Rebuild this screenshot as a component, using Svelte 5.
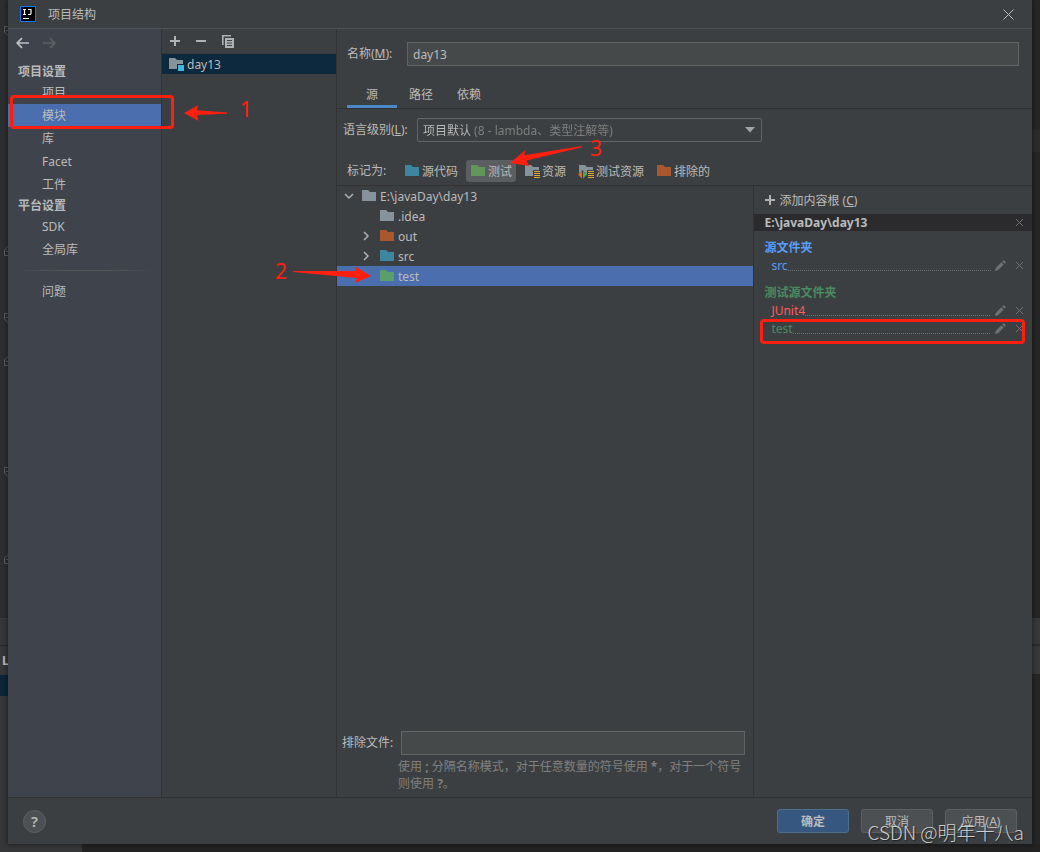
<script>
  const projectItems = ['项目', '模块', '库', 'Facet', '工件'];
  const platformItems = ['SDK', '全局库'];
  let section = $state('模块');
  let moduleName = $state('day13');
  let excluded = $state('');
  let tab = $state('源');

  const marks = [
    { label: '源代码', color: '#3e86a0' },
    { label: '测试', color: '#62975a', active: true },
    { label: '资源', color: '#87939a', badge: 'res' },
    { label: '测试资源', color: '#87939a', badge: 'testres' },
    { label: '排除的', color: '#a9572f' }
  ];

  const tree = [
    { label: 'E:\\javaDay\\day13', color: '#87939a', level: 0, arrow: 'down' },
    { label: '.idea', color: '#87939a', level: 1 },
    { label: 'out', color: '#a9572f', level: 1, arrow: 'right' },
    { label: 'src', color: '#3e86a0', level: 1, arrow: 'right' },
    { label: 'test', color: '#599e6b', level: 1, selected: true }
  ];

  // Fold markers in the editor behind the dialog: opening ones point down, closing ones point up.
  const gutterMarks = [
    { y: 31 },
    { y: 250, up: true },
    { y: 318 },
    { y: 360, up: true },
    { y: 472 },
    { y: 558, up: true }
  ];
</script>

{#snippet folder(color, badge)}
  <svg class="folder" width="16" height="16" viewBox="0 0 16 16" aria-hidden="true">
    <path d="M1 2h6l2 2h6v9H1z" fill={color} />
    {#if badge === 'module'}
      <path d="M9 8h7v8H9z" fill="#0d293e" />
      <path d="M10 9h6v6h-6z" fill="#40b6e0" />
    {:else if badge}
      <path d="M9 7h7v9H9z" fill="#3c3f41" />
      <path d="M10 8h6v1h-6zM10 10h6v1h-6zM10 12h6v1h-6zM10 14h6v1h-6z" fill="#e0a63c" shape-rendering="crispEdges" />
      {#if badge === 'testres'}
        <path d="M0 12l4.500-5L9 12v4H0z" fill="#3c3f41" />
        <path d="M4 8v7.500L.2 11.800z" fill="#f26522" />
        <path d="M5 8v7.500l3.800-3.700z" fill="#4fae3d" />
      {/if}
    {/if}
  </svg>
{/snippet}

{#snippet cross()}
  <svg width="9" height="9" viewBox="0 0 9 9" aria-hidden="true">
    <path d="M1 1l7 7M8 1L1 8" stroke="currentColor" fill="none" />
  </svg>
{/snippet}

{#snippet plus()}
  <svg width="10" height="10" viewBox="0 0 10 10" aria-hidden="true">
    <path d="M5 0v10M0 5h10" stroke="#afb1b3" stroke-width="2" />
  </svg>
{/snippet}

{#snippet rootEntry(name, kind)}
  <li class="entry {kind}">
    <span>{name}</span>
    <i class="dots"></i>
    <button class="bare mini" aria-label="编辑">
      <svg width="12" height="12" viewBox="0 0 12 12" aria-hidden="true">
        <path d="M1 11l.7-3 5.700-5.700 2.300 2.300L4 10.300zM8.200 1.500l1-1q.5-.4 1 0l1.300 1.300q.4.5 0 1l-1 1z" fill="#6e7173" />
      </svg>
    </button>
    <button class="bare mini" aria-label="移除">{@render cross()}</button>
  </li>
{/snippet}

<div class="desktop">
  <div class="behind" aria-hidden="true">
    {#each gutterMarks as mark}
      <svg class="gutter" style="top:{mark.y - 5}px" width="8" height="11" viewBox="0 0 8 11">
        {#if mark.up}
          <path d="M9 .5L4.500 5v5.500H9M6 6.500h3" fill="none" stroke="#5c5e60" />
        {:else}
          <path d="M9 .5H4.500v5.500L9 10.500M6 4.500h3" fill="none" stroke="#5c5e60" />
        {/if}
      </svg>
    {/each}
    <div class="strip left"><b>L</b><i></i></div>
    <div class="strip right"></div>
    <div class="caret-row"></div>
    <div class="status"></div>
  </div>

  <div class="dialog" role="dialog" aria-label="项目结构">
    <header>
      <svg width="16" height="16" viewBox="0 0 16 16" aria-hidden="true">
        <path d="M.5.5h15v15H.5z" fill="#000" stroke="#0d7cf2" />
        <path d="M3 3.500h3M4.500 3.500v5M3 8.500h3M8 3.500h3v3.700q0 1.300-1.300 1.300H8M3 12.500h6" fill="none" stroke="#fff" stroke-width="1.200" />
      </svg>
      <h1>项目结构</h1>
      <button class="bare close" aria-label="关闭">
        <svg width="11" height="11" viewBox="0 0 11 11" aria-hidden="true">
          <path d="M.5.5l10 10M10.500.5l-10 10" stroke="#bbb" />
        </svg>
      </button>
    </header>

    <div class="body">
      <nav class="sidebar">
        <div class="history">
          <button class="bare" aria-label="后退">
            <svg width="14" height="12" viewBox="0 0 14 12" aria-hidden="true">
              <path d="M13 6H1.500M6 1.200L1.200 6 6 10.800" fill="none" stroke="#bfc1c3" stroke-width="1.700" />
            </svg>
          </button>
          <button class="bare" aria-label="前进" disabled>
            <svg width="14" height="12" viewBox="0 0 14 12" aria-hidden="true">
              <path d="M0 6h11.500M7 1.200L11.800 6 7 10.800" fill="none" stroke="#5c6064" stroke-width="1.700" />
            </svg>
          </button>
        </div>
        <h2>项目设置</h2>
        {#each projectItems as item}
          <button class="nav" class:selected={section === item} onclick={() => (section = item)}>{item}</button>
        {/each}
        <h2>平台设置</h2>
        {#each platformItems as item}
          <button class="nav" class:selected={section === item} onclick={() => (section = item)}>{item}</button>
        {/each}
        <hr />
        <button class="nav" class:selected={section === '问题'} onclick={() => (section = '问题')}>问题</button>
        <div class="note box-one"></div>
        <svg class="note arrow-one" width="70" height="24" viewBox="0 0 70 24">
          <path d="M0 14L14.500 6l-1.800 5.200 30.300 2.300v1.200l-30 1.300 1.500 6z" fill="#ff1f10" />
          <text x="56" y="18">1</text>
        </svg>
      </nav>

      <section class="modules">
        <div class="tools">
          <button class="bare" aria-label="添加">{@render plus()}</button>
          <button class="bare" aria-label="删除">
            <svg width="10" height="10" viewBox="0 0 10 10" aria-hidden="true"><path d="M0 5h10" stroke="#afb1b3" stroke-width="2" /></svg>
          </button>
          <button class="bare" aria-label="复制">
            <svg width="12" height="13" viewBox="0 0 12 13" aria-hidden="true">
              <path d="M.8 10V.8H9" fill="none" stroke="#afb1b3" stroke-width="1.600" />
              <path d="M3 3h9v10H3z" fill="#afb1b3" />
              <path d="M5 5.500h5M5 8h5M5 10.500h5" stroke="#3c3f41" />
            </svg>
          </button>
        </div>
        <div class="module">{@render folder('#87939a', 'module')}<span>day13</span></div>
      </section>

      <main>
        <div class="row name">
          <label for="name">名称(<u>M</u>):</label>
          <input id="name" bind:value={moduleName} />
        </div>
        <div class="tabs" role="tablist">
          {#each ['源', '路径', '依赖'] as t}
            <button role="tab" aria-selected={tab === t} class:current={tab === t} onclick={() => (tab = t)}>{t}</button>
          {/each}
        </div>
        <div class="row level">
          <label for="level">语言级别(<u>L</u>):</label>
          <div class="combo">
            <select id="level"><option>项目默认 (8 - lambda、类型注解等)</option></select>
            <svg width="10" height="6" viewBox="0 0 10 6" aria-hidden="true"><path d="M0 0h10L5 5.500z" fill="#a2a5a7" /></svg>
          </div>
        </div>
        <div class="row marks">
          <span class="caption">标记为:</span>
          {#each marks as m}
            <button class="mark" class:active={m.active}>{@render folder(m.color, m.badge)}<span>{m.label}</span></button>
          {/each}
          <svg class="note arrow-three" width="100" height="32" viewBox="0 0 100 32">
            <path d="M0 25L15.500 12l-1.300 5.200L72 8v1.200L16.500 22.500l2.500 5.500z" fill="#ff1f10" />
            <text x="80" y="18">3</text>
          </svg>
        </div>

        <div class="split">
          <div class="left-pane">
            <ul class="tree">
              {#each tree as node}
                <li class:child={node.level === 1} class:selected={node.selected}>
                  <span class="twist">
                    {#if node.arrow === 'down'}
                      <svg width="10" height="10" viewBox="0 0 10 10"><path d="M1 3l4 4 4-4" fill="none" stroke="#afb1b3" stroke-width="1.500" /></svg>
                    {:else if node.arrow}
                      <svg width="10" height="10" viewBox="0 0 10 10"><path d="M2 1l4 4-4 4" fill="none" stroke="#afb1b3" stroke-width="1.500" /></svg>
                    {/if}
                  </span>
                  {@render folder(node.color)}<span class="label">{node.label}</span>
                </li>
              {/each}
            </ul>
            <svg class="note arrow-two" width="100" height="28" viewBox="0 0 100 28">
              <text x="0" y="20">2</text>
              <path d="M18 12l62.500 0L80 7.500 96 17l-16 7 1.800-5L18 13z" fill="#ff1f10" />
            </svg>
            <div class="exclude">
              <label for="excluded">排除文件:</label>
              <input id="excluded" bind:value={excluded} />
              <p>使用 <b>;</b> 分隔名称模式，对于任意数量的符号使用 <b>*</b>，对于一个符号则使用 <b>?</b>。</p>
            </div>
          </div>

          <aside>
            <button class="bare add">{@render plus()}<span>添加内容根 (<u>C</u>)</span></button>
            <div class="root"><b>E:\javaDay\day13</b><button class="bare mini" aria-label="移除">{@render cross()}</button></div>
            <h3 class="blue">源文件夹</h3>
            <ul>{@render rootEntry('src', 'blue')}</ul>
            <h3 class="green">测试源文件夹</h3>
            <ul>
              {@render rootEntry('JUnit4', 'red')}
              {@render rootEntry('test', 'green')}
            </ul>
            <div class="note box-two"></div>
          </aside>
        </div>
      </main>
    </div>

    <footer>
      <button class="help" aria-label="帮助">?</button>
      <button class="push primary">确定</button>
      <button class="push">取消</button>
      <button class="push">应用(<u>A</u>)</button>
    </footer>
  </div>
  <div class="watermark">CSDN @明年十八a</div>
</div>

<style>
  :global(body) { margin: 0; background: #262626; }
  .desktop {
    position: relative;
    box-sizing: border-box;
    height: 100vh;
    min-height: 640px;
    padding: 0 8px 8px;
    overflow: hidden;
    color: #bbb;
    font: 12px/20px "Noto Sans", "Noto Sans CJK SC", sans-serif;
  }
  .desktop *, .desktop *::before { box-sizing: border-box; }
  h1, h2, h3, p, ul { margin: 0; padding: 0; font-size: 12px; }
  ul { list-style: none; }
  svg { display: block; flex: none; }
  button, input, select { font: inherit; color: inherit; margin: 0; }
  .bare { display: flex; align-items: center; padding: 0; border: 0; background: none; }

  .behind { position: absolute; inset: 0; background: linear-gradient(90deg, #2d2e2f 50%, #262626 50%); }
  .gutter { position: absolute; left: 0; }
  .strip { position: absolute; top: 618px; width: 50%; }
  .strip.left { left: 0; bottom: 0; background: #353739; border-top: 1px solid #3a3c3e; }
  .strip.left b { display: block; margin-top: 26px; padding-left: 2px; border-top: 1px solid #292a2b; line-height: 29px; }
  .strip.left i { display: block; height: 21px; background: #0c2539; }
  .strip.right { right: 0; height: 56px; background: linear-gradient(#37383a 26px, #2c2d2e 26px 28px, #37383a 28px); }
  .caret-row { position: absolute; right: 0; top: 130px; width: 8px; height: 22px; background: #2c2c2c; }
  .status { position: absolute; left: 82px; right: 0; bottom: 0; height: 8px; background: #232323; }

  .dialog {
    position: relative;
    display: flex;
    flex-direction: column;
    height: 100%;
    background: #3c3f41;
    box-shadow: 0 0 5px 1px rgba(0, 0, 0, .4);
  }
  header { display: flex; align-items: center; height: 29px; padding: 0 18px 0 12px; border-bottom: 1px solid #505355; }
  h1 { flex: 1; margin-left: 12px; padding-top: 2px; font-weight: 400; }
  .body { flex: 1; display: flex; min-height: 0; }

  .sidebar { position: relative; z-index: 2; flex: none; width: 154px; background: #3e434c; border-right: 1px solid #323232; }
  .history { display: flex; gap: 13px; height: 28px; margin-bottom: 5px; padding-left: 8px; }
  h2 { padding-left: 10px; line-height: 19px; }
  .nav { display: block; width: 100%; height: 23px; padding: 0 0 0 34px; border: 0; background: none; line-height: 23px; text-align: left; }
  .nav.selected { background: #4b6eaf; }
  hr { height: 1px; margin: 9px 6px; border: 0; background: linear-gradient(90deg, transparent, #55575a 35%, #55575a 65%, transparent); }

  .modules { flex: none; width: 175px; border-right: 1px solid #323232; }
  .tools { display: flex; gap: 16px; height: 25px; padding-left: 8px; border-bottom: 1px solid #36393b; }
  .module { display: flex; align-items: center; gap: 3px; height: 20px; padding-left: 6px; background: #0d293e; }
  .module span, .tree .label { padding-top: 2px; }

  main { flex: 1; display: flex; flex-direction: column; min-width: 0; }
  .row { display: flex; align-items: center; flex: none; }
  .row label { flex: none; }
  input { width: 100%; height: 24px; padding: 0 5px; border: 1px solid #646464; background: #45494a; outline: 0; }
  .name { padding: 13px 13px 0 10px; }
  .name label { width: 60px; }
  .tabs { display: flex; height: 43px; padding: 15px 10px 0; border-bottom: 1px solid #323232; }
  .tabs button { padding: 4px 12px 0; border: 0; border-bottom: 3px solid transparent; background: none; }
  .tabs .current { min-width: 50px; border-bottom-color: #4a88c7; }
  .level { height: 42px; padding-left: 6px; }
  .level label { width: 74px; }
  .combo { display: flex; align-items: center; width: 50%; height: 24px; padding: 0 6px 0 5px; border: 1px solid #646464; border-radius: 2px; }
  select {
    flex: 1;
    min-width: 0;
    height: 22px;
    padding: 1px 0 0;
    border: 0;
    outline: 0;
    appearance: none;
    color: transparent;
    background: linear-gradient(90deg, #bbb 51px, #808080 51px);
    -webkit-background-clip: text;
    background-clip: text;
  }
  option { color: #bbb; background: #3c3f41; }
  .marks { position: relative; gap: 4px; height: 34px; padding: 6px 0 0 10px; }
  .caption { width: 49px; }
  .mark { display: flex; align-items: center; gap: 2px; height: 22px; padding: 0 4px; border: 0; border-radius: 3px; background: none; white-space: nowrap; }
  .mark span { padding-top: 2px; }
  .mark.active { background: #5a5e60; }

  .split { flex: 1; display: flex; min-height: 0; border-top: 1px solid #323232; }
  .left-pane { position: relative; flex: 3; display: flex; flex-direction: column; justify-content: space-between; border-right: 1px solid #323232; }
  .tree li { display: flex; align-items: center; gap: 3px; height: 20px; padding-left: 7px; }
  .tree .child { padding-left: 25px; }
  .tree .selected { background: #4b6eaf; }
  .twist { width: 14px; }
  .exclude { display: grid; grid-template-columns: 59px 1fr; padding: 0 8px 5px 5px; align-items: center; }
  .exclude p { grid-column: 2; margin: 3px 0 0 -3px; color: #808080; line-height: 17px; }

  aside { position: relative; flex: 2; }
  .add { gap: 4px; height: 28px; padding-left: 11px; }
  .add span { padding-top: 2px; }
  .root { display: flex; align-items: center; justify-content: space-between; height: 17px; padding: 0 8px 0 10px; background: #2b2b2d; }
  .mini { color: #6e7173; }
  h3 { height: 26px; padding: 7px 0 0 10px; line-height: 19px; }
  ul + h3 { margin-top: 1px; padding-top: 7px; }
  .entry { display: flex; align-items: center; gap: 9px; height: 18px; padding: 0 8px 0 17px; }
  .mini svg { margin-bottom: 1px; }
  .dots { flex: 1; align-self: flex-end; height: 1px; margin: 0 -6px 4px -9px; background: repeating-linear-gradient(90deg, #6e7173 0 1px, transparent 1px 2px); }
  .blue { color: #589df6; }
  .green { color: #4a8a5f; }
  .red { color: #ff5a5a; }

  footer { display: flex; align-items: center; gap: 12px; height: 47px; padding: 0 15px; border-top: 1px solid #323232; }
  .help { width: 23px; height: 23px; margin-right: auto; padding: 0; border: 1px solid #5e6060; border-radius: 50%; background: #4c5052; font-size: 15px; font-weight: 600; line-height: 20px; }
  .push { width: 72px; height: 24px; padding: 1px 0 0; border: 1px solid #5e6060; border-radius: 3px; background: #4c5052; }
  .primary { border-color: #4c708c; background: #365880; font-weight: 600; }

  .note { position: absolute; z-index: 3; overflow: visible; pointer-events: none; }
  .note text { fill: #ff1f10; font-size: 21px; }
  .box-one, .box-two { border: 3px solid #ff1f10; border-radius: 4px; }
  .box-one { left: 2px; right: -13px; top: 66px; height: 34px; }
  .arrow-one { left: 176px; top: 70px; }
  .arrow-two { left: -62px; top: 73px; }
  .arrow-three { left: 173px; top: -13px; }
  .box-two { left: 6px; right: 7px; top: 133px; height: 25px; }
  .watermark {
    position: absolute;
    right: 16px;
    bottom: 6px;
    color: rgba(225, 225, 225, .9);
    font: 300 19px/28px "Noto Sans CJK SC", sans-serif;
    text-shadow: 1px 1px 1px #222;
    pointer-events: none;
  }
</style>
